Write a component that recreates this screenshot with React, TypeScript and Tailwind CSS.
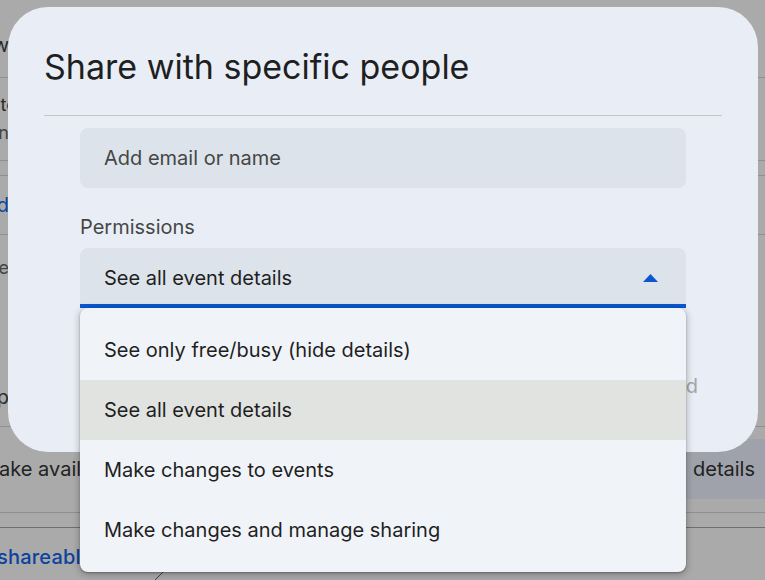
const font = "font-['Inter','Liberation_Sans',sans-serif]";

function Clip({ end, className, children }: { end: string; className?: string; children: React.ReactNode }) {
  return <div className={`flex justify-end whitespace-nowrap ${end} ${className ?? ""}`}>{children}</div>;
}

export default function App() {
  return (
    <div className={`relative h-[580px] w-[765px] overflow-hidden bg-[#aaaaaa] ${font}`}>
      <div className="flex flex-col text-[20px] text-[#2a2a2a]">
        <div className="flex h-[78px] items-center border-b border-[#8f8f8f] pt-3"><Clip end="w-[9px]">Show</Clip></div>
        <div className="flex h-[83px] flex-col justify-center gap-[6px] border-b border-[#8f8f8f] text-[18px] leading-[22px]">
          <Clip end="w-[17px]">to</Clip>
          <Clip end="w-[9px]" className="text-[#444]">on</Clip>
        </div>
        <div className="h-[15px] border-b border-[#8f8f8f]" />
        <div className="flex h-[59px] items-center border-b border-[#8f8f8f] text-[#0b429f]"><Clip end="w-[9px]">Add</Clip></div>
        <div className="flex h-[192px] flex-col items-start gap-[103px] border-b border-[#8f8f8f] pt-[20px] text-[18px] leading-[26px]">
          <Clip end="w-[9px]" className="text-[#444]">se</Clip>
          <Clip end="w-[9px]" className="text-[20px]">Help</Clip>
        </div>
        <div className="flex h-[86px] items-start justify-between border-b border-[#8f8f8f] text-[#222]">
          <div className="mt-3 flex h-[60px] items-center"><span className="-ml-[19px] whitespace-nowrap">Make available</span></div>
          <div className="mt-3 flex h-[60px] w-[140px] items-center justify-end bg-[#9fa2aa] pr-[10px]">details</div>
        </div>
        <div className="h-[15px] border-b border-[#6f6f6f]" />
        <div className="flex h-[53px] items-center pt-1 font-medium tracking-[0.2px] text-[#0b429f]"><span className="-ml-[3px] whitespace-nowrap">shareable link</span></div>
      </div>

      <div className="absolute left-2 top-[7px] flex h-[445px] w-[750px] flex-col rounded-[40px] bg-[#e9eef6] px-9 text-[#1f1f1f]">
        <h1 className="flex h-[109px] items-center border-b border-[#c4c7c5] pt-[10px] text-[34px] text-[#1f1f1f]">Share with specific people</h1>
        <div className="ml-9 mt-3 flex w-[606px] flex-col text-[20px]">
          <div className="flex h-[60px] items-center rounded-lg bg-[#dde3ea] px-6 text-[#444746]">Add email or name</div>
          <div className="mt-[25px] leading-[28px] text-[#444746]">Permissions</div>
          <div className="relative mt-[7px] flex h-[60px] items-center justify-between rounded-t-lg border-b-[4px] border-[#0b57d0] bg-[#dde3ea] pl-6 pr-7 pt-1 text-[#1f1f1f]">
            <span>See all event details</span>
            <svg width="15" height="8" viewBox="0 0 15 8" className="fill-[#0b57d0]"><path d="M7.5 0 15 8H0z" /></svg>
            <div className="absolute left-0 top-[60px] z-10 flex w-[606px] flex-col rounded-lg bg-[#f0f4f9] py-3 shadow-[0_2px_6px_2px_rgba(0,0,0,0.18),0_1px_2px_rgba(0,0,0,0.3)]">
              {["See only free/busy (hide details)", "See all event details", "Make changes to events", "Make changes and manage sharing"].map((t, i) => (
                <div key={t} className={`flex h-[60px] items-center px-6 ${i === 1 ? "bg-[#e1e3e1]" : ""}`}>{t}</div>
              ))}
            </div>
          </div>
        </div>
        <div className="mt-[64px] flex justify-end pr-[24px] text-[20px] leading-[28px] text-[#a3a5a8]">Send</div>
      </div>
      <svg width="14" height="10" viewBox="0 0 14 10" className="absolute left-[153px] top-[570px] stroke-[#444]"><path d="M2 10 12 0" fill="none" /></svg>
    </div>
  );
}
